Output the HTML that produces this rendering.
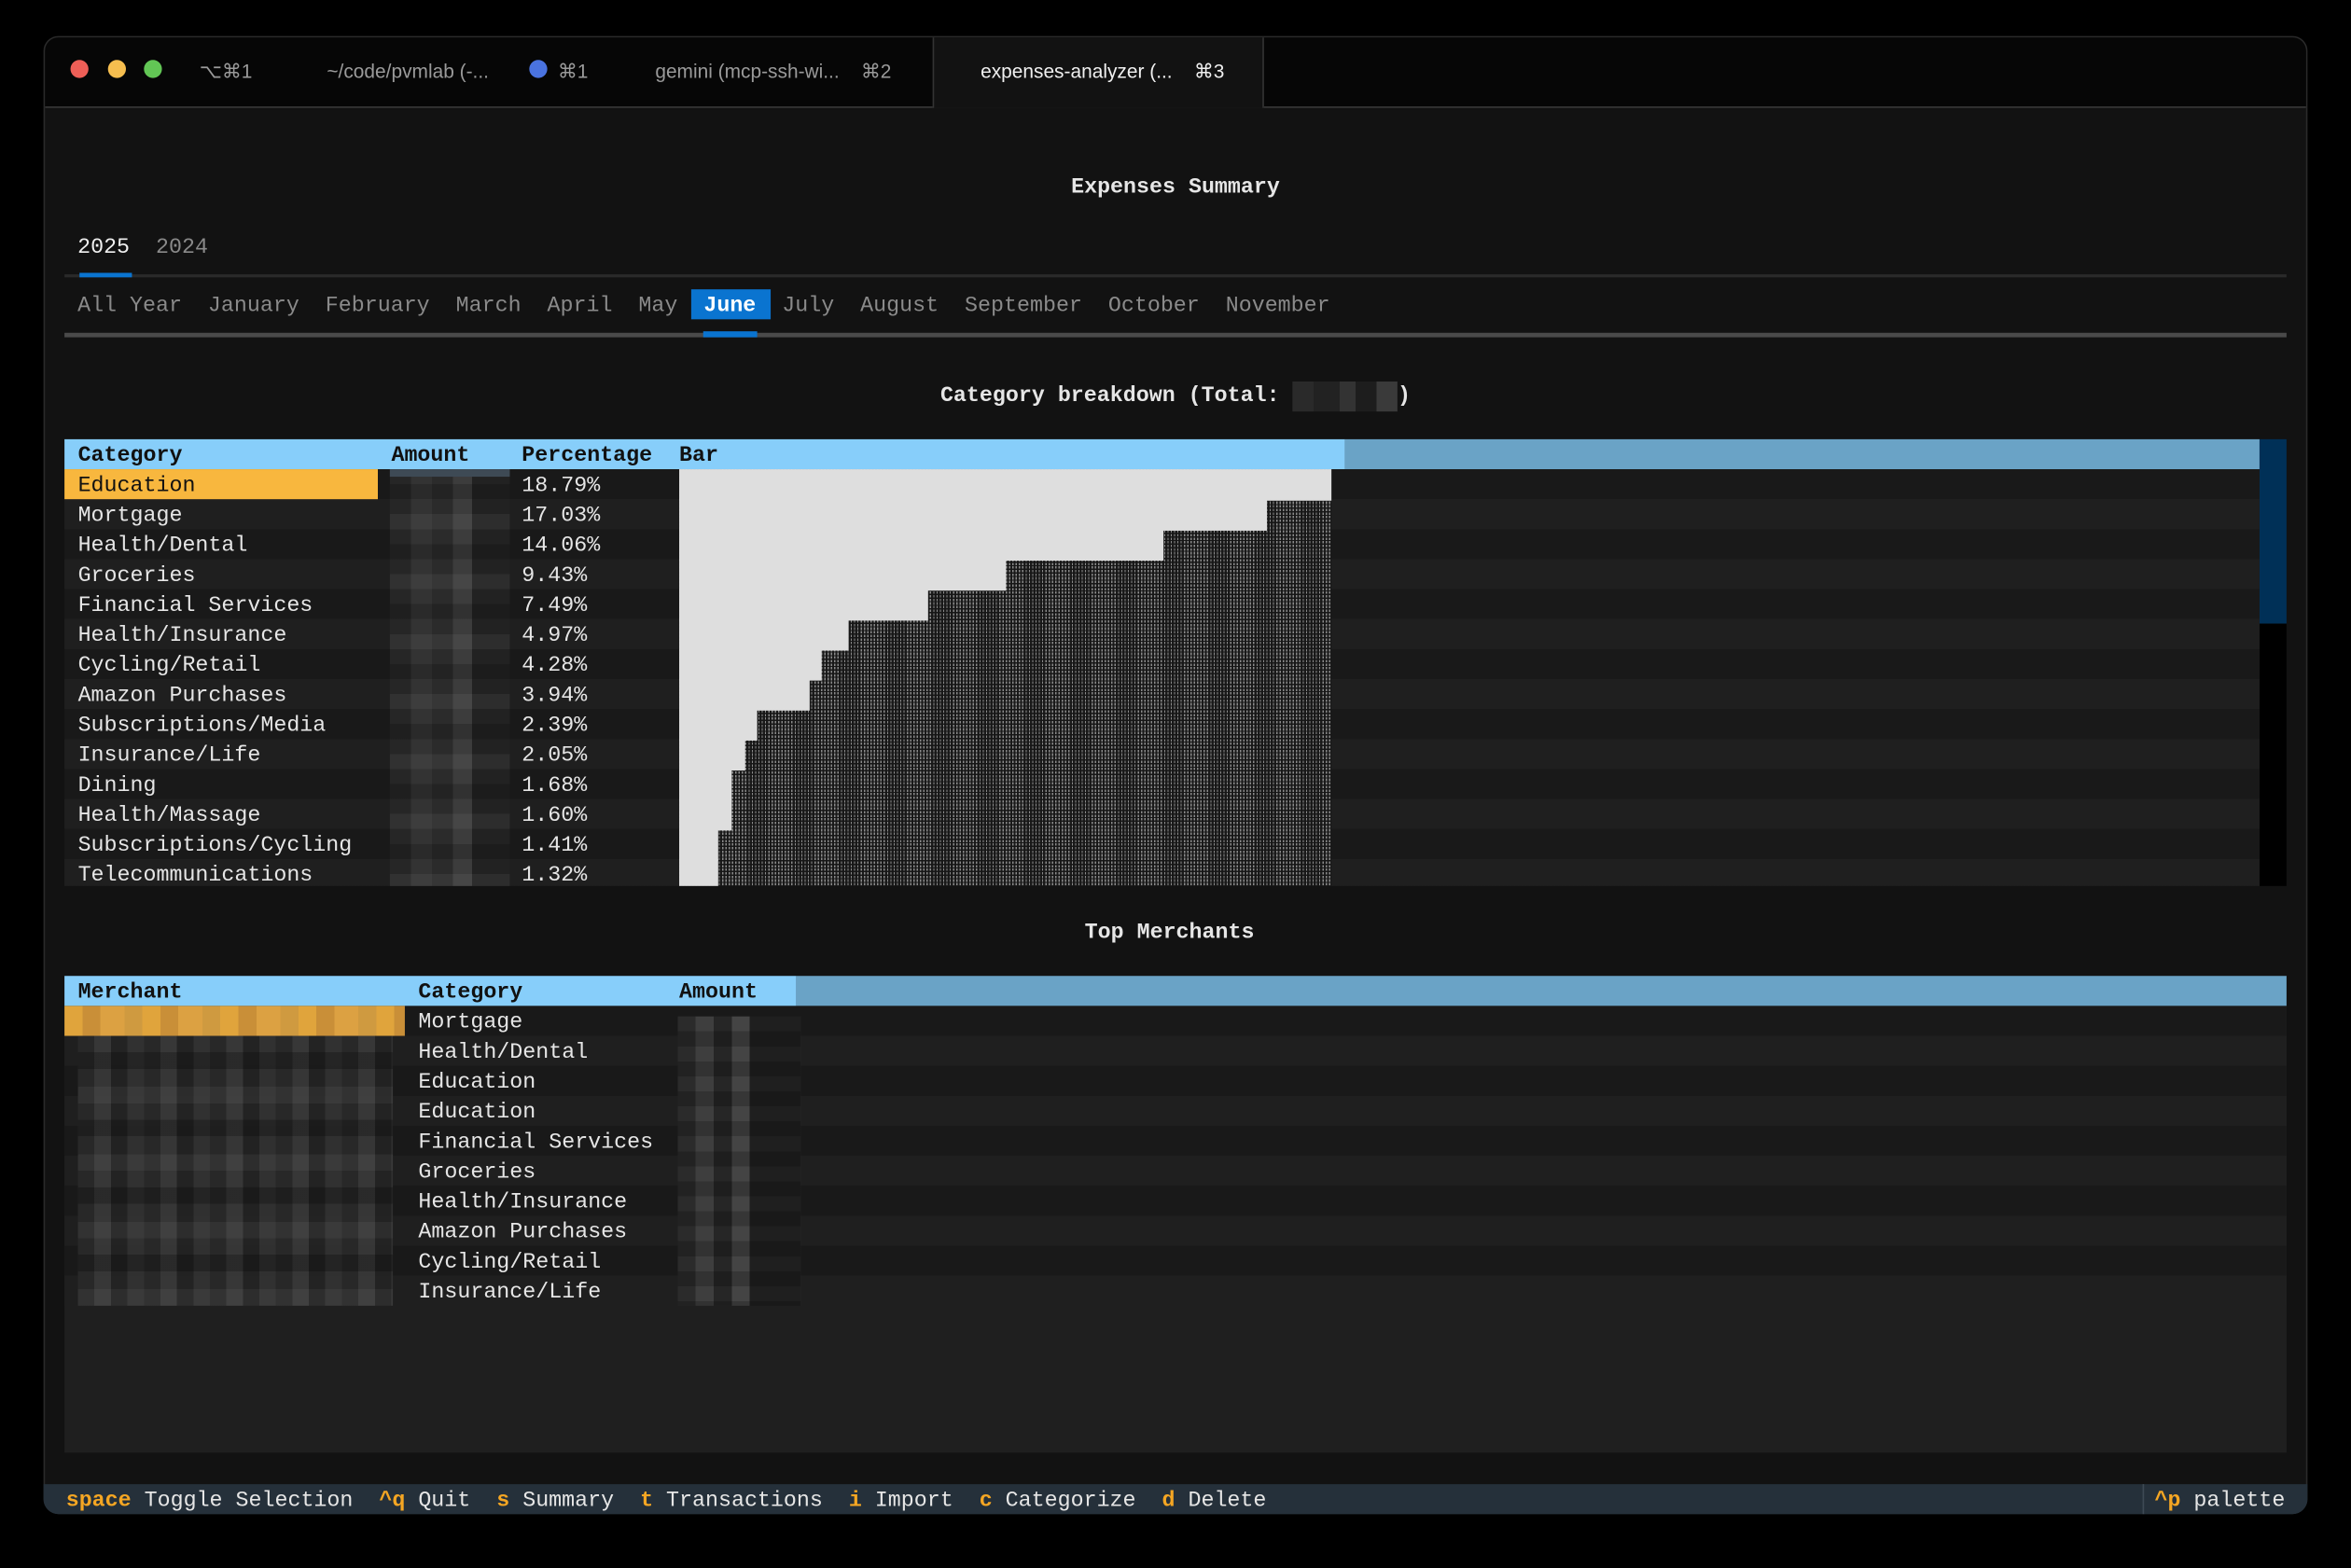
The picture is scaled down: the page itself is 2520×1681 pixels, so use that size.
<!DOCTYPE html>
<html><head><meta charset="utf-8"><style>
html,body{margin:0;padding:0;background:#000;width:2520px;height:1680px;overflow:hidden}
#r{position:absolute;left:0;top:0;width:1568px;height:1046px;transform:scale(1.60714);transform-origin:0 0;font-family:"Liberation Mono",monospace;font-size:14.5px;color:#e6e6e6}
.a{position:absolute}
.t{white-space:pre;line-height:20px;height:20px}
.b{font-weight:bold}
.row{position:absolute;height:20px;line-height:20px;white-space:pre}
.tx{transform:translateY(1.5px)}
.tab{position:absolute;top:25px;height:46px;line-height:46px;font-family:"Liberation Sans",sans-serif;font-size:13px;color:#9a9a9a;white-space:pre}
.k{color:#f5a623;font-weight:bold}
.hatch{background:repeating-linear-gradient(180deg,transparent 0 1.6px,#161616 1.6px 2.4px),repeating-linear-gradient(90deg,#8a8a8a 0 0.8px,#1a1a1a 0.8px 2.2px)}
.px{position:absolute;height:20.6px}
</style></head><body><div id="r">
<div class="a" style="left:29px;top:24px;width:1510px;height:986px;border-radius:10px;background:#121212;overflow:hidden;border:1px solid #2a2a2a;box-sizing:border-box">
 <div class="a" style="left:0;top:0;width:1510px;height:46px;background:#060606;border-bottom:1px solid #3a3a3a"></div>
 <div class="a" style="left:592px;top:0;width:219px;height:47px;background:#121212;border-left:1px solid #333;border-right:1px solid #333"></div>
</div>
<div class="a" style="left:47px;top:40px;width:12px;height:12px;border-radius:6px;background:#ee5f57"></div>
<div class="a" style="left:72px;top:40px;width:12px;height:12px;border-radius:6px;background:#f6be4f"></div>
<div class="a" style="left:96px;top:40px;width:12px;height:12px;border-radius:6px;background:#62c655"></div>
<div class="tab" style="left:133px">⌥⌘1</div>
<div class="tab" style="left:218px">~/code/pvmlab (-...</div>
<div class="a" style="left:353px;top:40px;width:12px;height:12px;border-radius:6px;background:#4a73e0"></div>
<div class="tab" style="left:372px">⌘1</div>
<div class="tab" style="left:437px">gemini (mcp-ssh-wi...&nbsp;&nbsp;&nbsp;&nbsp;⌘2</div>
<div class="tab" style="left:654px;color:#f0f0f0">expenses-analyzer (...&nbsp;&nbsp;&nbsp;&nbsp;⌘3</div>

<div class="a t b tx" style="left:0;width:1568px;text-align:center;top:114px">Expenses Summary</div>

<div class="a t tx" style="left:43px;top:154px;color:#8a8a8a"> <span style="color:#f0f0f0">2025</span>  2024</div>
<div class="a" style="left:43px;top:183px;width:1482px;height:2px;background:#2a2a2a"></div>
<div class="a" style="left:53px;top:182px;width:35px;height:3px;background:#0a74d0"></div>

<div class="a" style="left:461px;top:193px;width:53px;height:20px;background:#0a74d0"></div>
<div class="a t tx" style="left:43px;top:193px;color:#8a8a8a"> All Year  January  February  March  April  May <span style="color:#fff;font-weight:bold"> June </span> July  August  September  October  November</div>
<div class="a" style="left:43px;top:222px;width:1482px;height:3px;background:#4a4a4a"></div>
<div class="a" style="left:469px;top:221px;width:36px;height:4px;background:#0a74d0"></div>

<div class="a t b tx" style="left:0;width:1568px;text-align:center;top:253px">Category breakdown (Total: <span style="display:inline-block;width:70px;height:20px;vertical-align:top;background:linear-gradient(90deg,#2a2a2a 0 20%,#222 20% 45%,#333 45% 60%,#1d1d1d 60% 80%,#3a3a3a 80%)"></span>)</div>

<div class="a" style="left:43px;top:293px;width:854px;height:20px;background:#87cefa"></div>
<div class="a" style="left:897px;top:293px;width:610px;height:20px;background:#6aa3c6"></div>
<div class="a" style="left:1507px;top:293px;width:18px;height:123px;background:#003057"></div>
<div class="a" style="left:1507px;top:416px;width:18px;height:175px;background:#000"></div>
<div class="row b tx" style="left:52px;top:293px;color:#111">Category</div>
<div class="row b tx" style="left:261px;top:293px;color:#111">Amount</div>
<div class="row b tx" style="left:348px;top:293px;color:#111">Percentage</div>
<div class="row b tx" style="left:453px;top:293px;color:#111">Bar</div>

<div class="a" style="left:43px;top:313px;width:1464px;height:278px;background:repeating-linear-gradient(180deg,#191919 0 20px,#1f1f1f 20px 40px)"></div>
<div class="a" style="left:43px;top:313px;width:209px;height:20px;background:#f8b73e"></div>
<div class="a" style="left:260px;top:313px;width:80px;height:278px;background:repeating-linear-gradient(180deg,transparent 0 10px,rgba(0,0,0,.18) 10px 20px,transparent 20px 30px,rgba(255,255,255,.05) 30px 40px),repeating-linear-gradient(90deg,#262626 0 14px,#333 14px 28px,#2b2b2b 28px 42px,#3c3c3c 42px 55px,#222 55px 80px)"></div>
<div class="a" style="left:260px;top:313px;width:80px;height:5px;background:#3e4a55"></div>

<div class="row tx" style="left:52px;top:313px;color:#111">Education</div>
<div class="row tx" style="left:52px;top:333px">Mortgage</div>
<div class="row tx" style="left:52px;top:353px">Health/Dental</div>
<div class="row tx" style="left:52px;top:373px">Groceries</div>
<div class="row tx" style="left:52px;top:393px">Financial Services</div>
<div class="row tx" style="left:52px;top:413px">Health/Insurance</div>
<div class="row tx" style="left:52px;top:433px">Cycling/Retail</div>
<div class="row tx" style="left:52px;top:453px">Amazon Purchases</div>
<div class="row tx" style="left:52px;top:473px">Subscriptions/Media</div>
<div class="row tx" style="left:52px;top:493px">Insurance/Life</div>
<div class="row tx" style="left:52px;top:513px">Dining</div>
<div class="row tx" style="left:52px;top:533px">Health/Massage</div>
<div class="row tx" style="left:52px;top:553px">Subscriptions/Cycling</div>
<div class="row tx" style="left:52px;top:573px">Telecommunications</div>

<div class="row tx" style="left:348px;top:313px">18.79%</div>
<div class="row tx" style="left:348px;top:333px">17.03%</div>
<div class="row tx" style="left:348px;top:353px">14.06%</div>
<div class="row tx" style="left:348px;top:373px">9.43%</div>
<div class="row tx" style="left:348px;top:393px">7.49%</div>
<div class="row tx" style="left:348px;top:413px">4.97%</div>
<div class="row tx" style="left:348px;top:433px">4.28%</div>
<div class="row tx" style="left:348px;top:453px">3.94%</div>
<div class="row tx" style="left:348px;top:473px">2.39%</div>
<div class="row tx" style="left:348px;top:493px">2.05%</div>
<div class="row tx" style="left:348px;top:513px">1.68%</div>
<div class="row tx" style="left:348px;top:533px">1.60%</div>
<div class="row tx" style="left:348px;top:553px">1.41%</div>
<div class="row tx" style="left:348px;top:573px">1.32%</div>

<div class="a hatch" style="left:453px;top:313px;width:435px;height:278px"></div>
<div class="px" style="left:453px;top:313px;width:435px;background:#dedede"></div>
<div class="px" style="left:453px;top:333px;width:392px;background:#dedede"></div>
<div class="px" style="left:453px;top:353px;width:323px;background:#dedede"></div>
<div class="px" style="left:453px;top:373px;width:218px;background:#dedede"></div>
<div class="px" style="left:453px;top:393px;width:166px;background:#dedede"></div>
<div class="px" style="left:453px;top:413px;width:113px;background:#dedede"></div>
<div class="px" style="left:453px;top:433px;width:95px;background:#dedede"></div>
<div class="px" style="left:453px;top:453px;width:87px;background:#dedede"></div>
<div class="px" style="left:453px;top:473px;width:52px;background:#dedede"></div>
<div class="px" style="left:453px;top:493px;width:44px;background:#dedede"></div>
<div class="px" style="left:453px;top:513px;width:35px;background:#dedede"></div>
<div class="px" style="left:453px;top:533px;width:35px;background:#dedede"></div>
<div class="px" style="left:453px;top:553px;width:26px;background:#dedede"></div>
<div class="px" style="left:453px;top:573px;width:26px;height:18px;background:#dedede"></div>

<div class="a t b tx" style="left:0;width:1560px;text-align:center;top:611px">Top Merchants</div>

<div class="a" style="left:43px;top:651px;width:1482px;height:318px;background:#1f1f1f"></div>
<div class="a" style="left:43px;top:651px;width:488px;height:20px;background:#87cefa"></div>
<div class="a" style="left:531px;top:651px;width:994px;height:20px;background:#6aa3c6"></div>
<div class="row b tx" style="left:52px;top:651px;color:#111">Merchant</div>
<div class="row b tx" style="left:279px;top:651px;color:#111">Category</div>
<div class="row b tx" style="left:453px;top:651px;color:#111">Amount</div>
<div class="a" style="left:43px;top:671px;width:1482px;height:200px;background:repeating-linear-gradient(180deg,#191919 0 20px,#1f1f1f 20px 40px)"></div>
<div class="a" style="left:43px;top:671px;width:227px;height:20px;background:repeating-linear-gradient(90deg,#e0a43c 0 12px,#c98f38 12px 24px,#dca142 24px 40px,#cf9a40 40px 52px)"></div>
<div class="a" style="left:52px;top:691px;width:210px;height:180px;background:repeating-linear-gradient(180deg,transparent 0 11px,rgba(0,0,0,.25) 11px 22px,transparent 22px 34px,rgba(255,255,255,.05) 34px 45px),repeating-linear-gradient(90deg,#2a2a2a 0 11px,#3a3a3a 11px 22px,#242424 22px 33px,#333 33px 44px),#222;opacity:.9"></div>
<div class="a" style="left:452px;top:678px;width:82px;height:193px;background:repeating-linear-gradient(180deg,transparent 0 10px,rgba(0,0,0,.2) 10px 20px),repeating-linear-gradient(90deg,#2b2b2b 0 12px,#3e3e3e 12px 24px,#262626 24px 36px,#444 36px 48px,#1f1f1f 48px 82px)"></div>
<div class="row tx" style="left:279px;top:671px">Mortgage</div>
<div class="row tx" style="left:279px;top:691px">Health/Dental</div>
<div class="row tx" style="left:279px;top:711px">Education</div>
<div class="row tx" style="left:279px;top:731px">Education</div>
<div class="row tx" style="left:279px;top:751px">Financial Services</div>
<div class="row tx" style="left:279px;top:771px">Groceries</div>
<div class="row tx" style="left:279px;top:791px">Health/Insurance</div>
<div class="row tx" style="left:279px;top:811px">Amazon Purchases</div>
<div class="row tx" style="left:279px;top:831px">Cycling/Retail</div>
<div class="row tx" style="left:279px;top:851px">Insurance/Life</div>

<div class="a" style="left:29px;top:990px;width:1510px;height:20px;background:#25303a;border-radius:0 0 10px 10px"></div>
<div class="a" style="left:1429px;top:990px;width:1px;height:20px;background:#3e4a55"></div>
<div class="row tx" style="left:44px;top:990px"><span class="k">space</span> Toggle Selection  <span class="k">^q</span> Quit  <span class="k">s</span> Summary  <span class="k">t</span> Transactions  <span class="k">i</span> Import  <span class="k">c</span> Categorize  <span class="k">d</span> Delete</div>
<div class="row tx" style="left:1437px;top:990px"><span class="k">^p</span> palette</div>
</div></body></html>
